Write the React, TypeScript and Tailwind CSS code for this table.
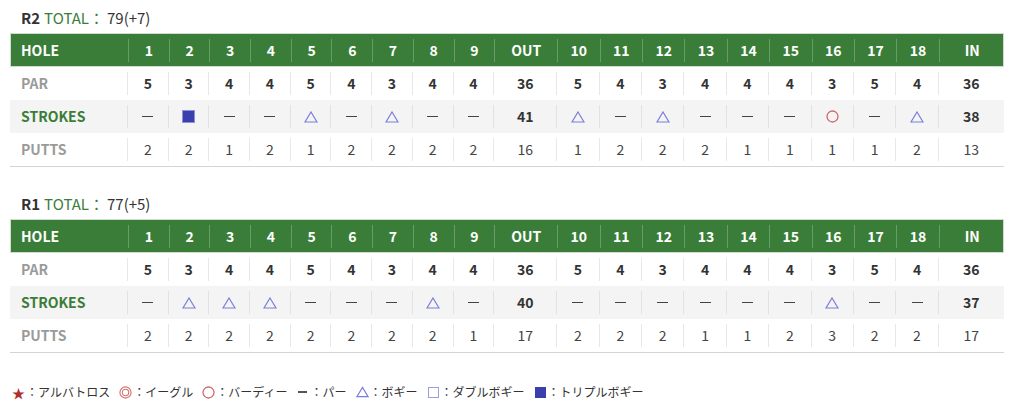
const FONT = "font-['Noto_Sans_CJK_JP','Noto_Sans',sans-serif]";

type Mark = "par" | "bogey" | "birdie" | "triple";

const PAR = [5, 3, 4, 4, 5, 4, 3, 4, 4, 36, 5, 4, 3, 4, 4, 4, 3, 5, 4, 36];

const rounds: {
  name: string;
  total: string;
  strokes: (Mark | number)[];
  putts: number[];
}[] = [
  {
    name: "R2",
    total: "79(+7)",
    strokes: ["par", "triple", "par", "par", "bogey", "par", "bogey", "par", "par", 41, "bogey", "par", "bogey", "par", "par", "par", "birdie", "par", "bogey", 38],
    putts: [2, 2, 1, 2, 1, 2, 2, 2, 2, 16, 1, 2, 2, 2, 1, 1, 1, 1, 2, 13],
  },
  {
    name: "R1",
    total: "77(+5)",
    strokes: ["par", "bogey", "bogey", "bogey", "par", "par", "par", "bogey", "par", 40, "par", "par", "par", "par", "par", "par", "bogey", "par", "par", 37],
    putts: [2, 2, 2, 2, 2, 2, 2, 2, 1, 17, 2, 2, 2, 1, 1, 2, 3, 2, 2, 17],
  },
];

const HEAD = ["1", "2", "3", "4", "5", "6", "7", "8", "9", "OUT", "10", "11", "12", "13", "14", "15", "16", "17", "18", "IN"];

const GRID = "grid grid-cols-[117px_repeat(9,40.7px)_63px_repeat(9,42.4px)_66px]";

function Triangle() {
  return (
    <svg width="14" height="12" viewBox="0 0 14 12">
      <path d="M7 1 L13 11 L1 11 Z" fill="none" stroke="#7a7ed8" strokeWidth="1.2" />
    </svg>
  );
}

function Circle() {
  return (
    <svg width="13" height="13" viewBox="0 0 13 13">
      <circle cx="6.5" cy="6.5" r="5.5" fill="none" stroke="#d06a6a" strokeWidth="1.3" />
    </svg>
  );
}

function MarkIcon({ m }: { m: Mark }) {
  if (m === "bogey") return <Triangle />;
  if (m === "birdie") return <Circle />;
  if (m === "triple") return <span className="block h-[11px] w-[11px] bg-[#3b3fae] ring-1 ring-[#8f92d8]" />;
  return <span className="block h-[1.5px] w-[11px] bg-[#444]" />;
}

function Cell({ children, first, className = "" }: { children: React.ReactNode; first?: boolean; className?: string }) {
  return (
    <div className="py-[5px]">
      <div className={`flex h-[23px] items-center justify-center ${first ? "" : "border-l"} ${className}`}>{children}</div>
    </div>
  );
}

function Scorecard({ round }: { round: (typeof rounds)[number] }) {
  return (
    <div>
      <div className="flex items-baseline pl-[21px] text-[15px] leading-[20px] text-[#333]">
        <span className="font-bold">{round.name}</span>
        <span className="ml-[4px] text-[#3a7d38]">TOTAL：</span>
        <span className="ml-[3px]">{round.total}</span>
      </div>
      <div className="ml-[10px] mt-[5px] w-[994px] border-b border-[#d4d4d4]">
        <div className={`${GRID} h-[34px] border border-[#cfdccf] bg-[#3a7d38] text-[14px] font-bold text-white`}>
          <div className="py-[5px]">
            <div className="flex h-[23px] items-center pl-[10px]">HOLE</div>
          </div>
          {HEAD.map((h) => (
            <Cell key={h} className="border-[#6a9c68]">{h}</Cell>
          ))}
        </div>
        <div className={`${GRID} h-[33px] text-[14px]`}>
          <div className="flex items-center pl-[11px] font-bold text-[#9a9a9a]">PAR</div>
          {PAR.map((p, i) => (
            <Cell key={i} className="border-[#e8e8e8] font-bold text-[#333]">{p}</Cell>
          ))}
        </div>
        <div className={`${GRID} h-[33px] bg-[#f4f4f4] text-[14px]`}>
          <div className="flex items-center pl-[11px] font-bold text-[#3a7d38]">STROKES</div>
          {round.strokes.map((s, i) => (
            <Cell key={i} className="border-[#e2e2e2] font-bold text-[#333]">
              {typeof s === "number" ? s : <MarkIcon m={s} />}
            </Cell>
          ))}
        </div>
        <div className={`${GRID} h-[33px] text-[14px]`}>
          <div className="flex items-center pl-[11px] font-bold text-[#9a9a9a]">PUTTS</div>
          {round.putts.map((p, i) => (
            <Cell key={i} className="border-[#e8e8e8] text-[#444]">{p}</Cell>
          ))}
        </div>
      </div>
    </div>
  );
}

function Legend() {
  const items: [React.ReactNode, string][] = [
    [<span className="text-[13px] leading-none text-[#b52a2a]">★</span>, "アルバトロス"],
    [
      <svg width="13" height="13" viewBox="0 0 13 13">
        <circle cx="6.5" cy="6.5" r="5.6" fill="none" stroke="#d47070" strokeWidth="1.1" />
        <circle cx="6.5" cy="6.5" r="3.2" fill="none" stroke="#d47070" strokeWidth="1.1" />
      </svg>,
      "イーグル",
    ],
    [<Circle />, "バーディー"],
    [<span className="block h-[1.5px] w-[9px] bg-[#555]" />, "パー"],
    [<Triangle />, "ボギー"],
    [<span className="block h-[11px] w-[11px] border border-[#9a9ee0]" />, "ダブルボギー"],
    [<span className="block h-[11px] w-[11px] bg-[#3b3fae]" />, "トリプルボギー"],
  ];
  return (
    <div className="mt-[30px] flex items-center gap-[9px] pl-[12px] text-[12px] text-[#333]">
      {items.map(([icon, label]) => (
        <div key={label} className="flex items-center">
          <span className="flex w-[13px] items-center justify-center">{icon}</span>
          <span className="ml-[1px]">：{label}</span>
        </div>
      ))}
    </div>
  );
}

export default function App() {
  return (
    <div className={`${FONT} h-[414px] w-[1024px] bg-white pt-[8px]`}>
      <Scorecard round={rounds[0]} />
      <div className="h-[27px]" />
      <Scorecard round={rounds[1]} />
      <Legend />
    </div>
  );
}
